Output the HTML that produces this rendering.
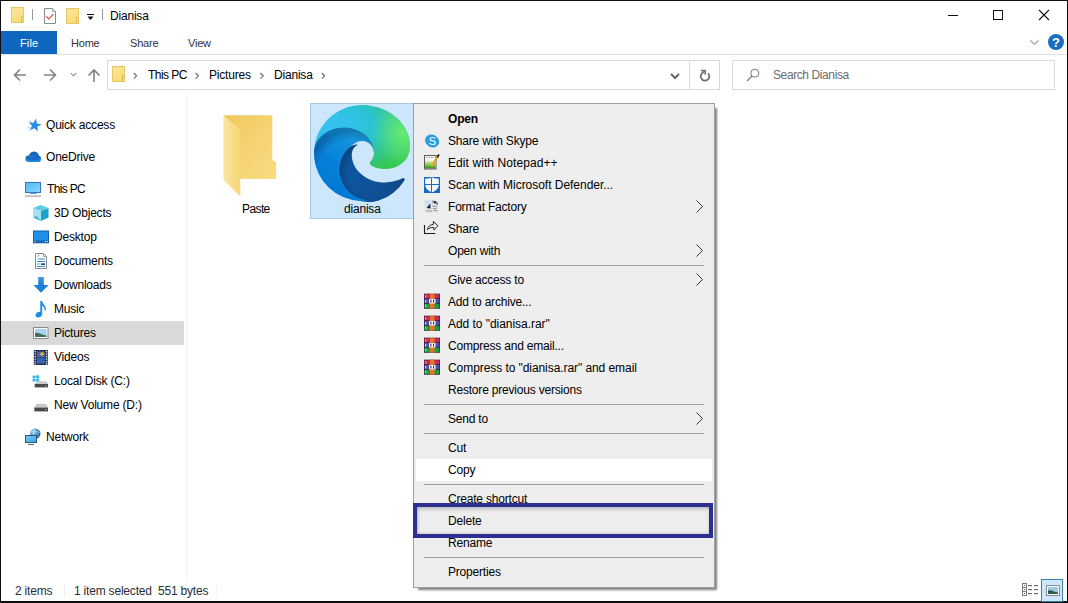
<!DOCTYPE html>
<html><head><meta charset="utf-8">
<style>
html,body{margin:0;padding:0}
body{width:1068px;height:603px;overflow:hidden;background:#fff;position:relative;font-family:"Liberation Sans",sans-serif;color:#000}
.a{position:absolute}
.t{position:absolute;white-space:nowrap;font-size:12px;line-height:14px;letter-spacing:-0.2px}
svg{position:absolute;overflow:visible}
</style></head><body>
<!-- window borders -->
<div class="a" style="left:0;top:0;width:1068px;height:1px;background:#0d0d0d"></div>
<div class="a" style="left:0;top:0;width:1px;height:603px;background:#0d0d0d"></div>
<div class="a" style="left:1067px;top:0;width:1px;height:603px;background:#0d0d0d"></div>
<div class="a" style="left:0;top:601px;width:1068px;height:2px;background:#0d0d0d"></div>

<!-- TITLE BAR -->
<div id="title">
<div class="t" style="left:110px;top:9px;">Dianisa</div>
</div>

<!-- TITLE ICONS -->
<svg style="left:0;top:0" width="1068" height="100">
 <defs><linearGradient id="qaf" x1="0" y1="0" x2="0.3" y2="1"><stop offset="0" stop-color="#fbe59c"/><stop offset="1" stop-color="#f8dc78"/></linearGradient></defs>
 <!-- qa folder 1 -->
 <rect x="11.5" y="7.5" width="12" height="15" fill="url(#qaf)" stroke="#e8c866" stroke-width="1"/>
 
 <path d="M21.5 16.5 V22.5 M21.5 16.5 H23.5" stroke="#dfb75a" stroke-width="1" fill="none"/>
 <line x1="32.5" y1="9" x2="32.5" y2="20" stroke="#9a9a9a" stroke-width="1"/>
 <!-- doc check -->
 <path d="M44.5 8.5 H52.5 L55.5 11.5 V23.5 H44.5 Z" fill="#fff" stroke="#8a8a8a" stroke-width="1"/>
 <path d="M52.5 8.5 V11.5 H55.5 Z" fill="#e8e8e8" stroke="#9a9a9a" stroke-width="0.8"/>
 <path d="M46.3 16.2 L48.7 19 L53.5 14" fill="none" stroke="#d86448" stroke-width="1.2"/>
 <!-- folder 2 -->
 <rect x="66.5" y="8.5" width="12" height="15" fill="url(#qaf)" stroke="#e8c866" stroke-width="1"/>
 
 <path d="M76.5 17.5 V23.5 M76.5 17.5 H78.5" stroke="#dfb75a" stroke-width="1" fill="none"/>
 <!-- dropdown -->
 <rect x="87" y="14" width="7" height="1" fill="#111"/>
 <path d="M87.5 16.6 H93.5 L90.5 20 Z" fill="#111"/>
 <line x1="102.5" y1="9" x2="102.5" y2="20" stroke="#9a9a9a" stroke-width="1"/>
 <!-- window controls -->
 <rect x="948" y="15" width="10" height="1" fill="#111"/>
 <rect x="993.5" y="10.5" width="9" height="9" fill="none" stroke="#111" stroke-width="1"/>
 <path d="M1039 10 L1049 20 M1049 10 L1039 20" stroke="#111" stroke-width="1.1"/>
 <!-- ribbon chevron + help -->
 <path d="M1030.5 40.5 L1034.5 44.3 L1038.5 40.5" fill="none" stroke="#9a9a9a" stroke-width="1.1"/>
 <circle cx="1056" cy="42" r="8" fill="#1c6cc0"/>
 <text x="1056" y="46.6" text-anchor="middle" font-family="Liberation Sans" font-weight="bold" font-size="13" fill="#fff">?</text>
 <!-- nav arrows -->
 <g stroke="#828282" stroke-width="1.6" fill="none">
  <path d="M14.5 75 H26 M20 69.5 L14.5 75 L20 80.5"/>
  <path d="M44 75 H55.5 M50 69.5 L55.5 75 L50 80.5"/>
  <path d="M88.5 75.5 L94 70 L99.5 75.5 M94 70 V82"/>
 </g>
 <path d="M70.8 73.2 L73.5 75.8 L76.2 73.2" fill="none" stroke="#8a8a8a" stroke-width="1.1"/>
 <!-- address folder -->
 <rect x="112.5" y="66.5" width="12" height="15" fill="url(#qaf)" stroke="#e8c866" stroke-width="1"/>
 
 <path d="M122.5 75.5 V81.5 M122.5 75.5 H124.5" stroke="#dfb75a" stroke-width="1" fill="none"/>
 <g stroke="#707070" stroke-width="1.2" fill="none">
  <path d="M133.8 73 L136.6 75.8 L133.8 78.6"/>
  <path d="M195.6 73 L198.4 75.8 L195.6 78.6"/>
  <path d="M260.4 73 L263.2 75.8 L260.4 78.6"/>
  <path d="M321.8 73 L324.6 75.8 L321.8 78.6"/>
 </g>
 <path d="M671 74 L675 78 L679 74" fill="none" stroke="#666" stroke-width="2"/>
 <!-- refresh -->
 <path d="M708 73.3 A4.3 4.3 0 1 1 702 73.3 L704.6 70.8" fill="none" stroke="#707070" stroke-width="1.8"/>
 <path d="M701 70.6 H705.2 V74.8" fill="none" stroke="#707070" stroke-width="1.5"/>
 <!-- search -->
 <circle cx="754.8" cy="73.2" r="4" fill="none" stroke="#777" stroke-width="1"/>
 <path d="M752 76 L747 81" stroke="#777" stroke-width="1.1"/>
</svg>

<!-- RIBBON TABS -->
<div class="a" style="left:1px;top:31px;width:56px;height:23px;background:#0e66bf"></div>
<div class="t" style="left:20px;top:36px;color:#fff;font-size:11px;letter-spacing:0.15px">File</div>
<div class="t" style="left:71px;top:36px;color:#333;font-size:11px">Home</div>
<div class="t" style="left:130px;top:36px;color:#333;font-size:11px">Share</div>
<div class="t" style="left:188px;top:36px;color:#333;font-size:11px">View</div>
<div class="a" style="left:1px;top:54px;width:1066px;height:1px;background:#e3e3e3"></div>

<!-- ADDRESS BAR -->
<div class="a" style="left:107px;top:60px;width:611px;height:28px;border:1px solid #d9d9d9"></div>
<div class="a" style="left:689px;top:61px;width:1px;height:28px;background:#d9d9d9"></div>
<div class="t" style="left:148px;top:68px;letter-spacing:-0.55px">This PC</div>
<div class="t" style="left:209px;top:68px;">Pictures</div>
<div class="t" style="left:274px;top:68px;">Dianisa</div>
<div class="a" style="left:732px;top:60px;width:321px;height:28px;border:1px solid #d9d9d9"></div>
<div class="t" style="left:773px;top:68px;color:#6d6d6d;letter-spacing:-0.4px">Search Dianisa</div>

<!-- NAV PANE -->
<div class="a" style="left:186px;top:92px;width:1px;height:490px;background:#f3f3f3"></div>
<div class="a" style="left:1px;top:321px;width:183px;height:24px;background:#d9d9d9"></div>
<div class="t" style="left:46px;top:118px;">Quick access</div>
<div class="t" style="left:46px;top:150px;">OneDrive</div>
<div class="t" style="left:47px;top:182px;letter-spacing:-0.65px">This PC</div>
<div class="t" style="left:54px;top:206px;">3D Objects</div>
<div class="t" style="left:54px;top:230px;">Desktop</div>
<div class="t" style="left:54px;top:254px;">Documents</div>
<div class="t" style="left:54px;top:278px;">Downloads</div>
<div class="t" style="left:54px;top:302px;">Music</div>
<div class="t" style="left:54px;top:326px;">Pictures</div>
<div class="t" style="left:54px;top:350px;">Videos</div>
<div class="t" style="left:54px;top:374px;">Local Disk (C:)</div>
<div class="t" style="left:54px;top:398px;">New Volume (D:)</div>
<div class="t" style="left:46px;top:430px;">Network</div>

<!-- CONTENT -->
<div class="t" style="left:242px;top:202px;letter-spacing:-0.6px">Paste</div>
<div class="a" style="left:310px;top:103px;width:102px;height:114px;background:#cce6fb;border:1px solid #a6c9e6"></div>
<div class="t" style="left:344px;top:202px;">dianisa</div>

<!-- NAV ICONS -->
<svg style="left:0;top:0" width="200" height="460">
 <defs>
  <linearGradient id="cloudg" x1="0" y1="0" x2="0" y2="1"><stop offset="0" stop-color="#0b5cb0"/><stop offset="1" stop-color="#2c8fe2"/></linearGradient>
  <linearGradient id="scrg" x1="0" y1="0" x2="1" y2="1"><stop offset="0" stop-color="#4fb8f5"/><stop offset="1" stop-color="#8ad6fa"/></linearGradient>
  <linearGradient id="dlg" x1="0" y1="0" x2="0" y2="1"><stop offset="0" stop-color="#3d9ae6"/><stop offset="1" stop-color="#1a7ad6"/></linearGradient>
 </defs>
 <!-- star -->
 <path d="M36.00 118.60 L36.89 123.39 L41.63 124.44 L37.36 126.76 L37.82 131.60 L34.30 128.26 L29.84 130.19 L31.93 125.80 L28.71 122.16 L33.53 122.79 Z" fill="#2a8de0"/>
 <path d="M27.5 127.8 H30.5 M28.5 129.8 H31 M29.3 121.8 H31.5" stroke="#9ccbf0" stroke-width="0.9"/>
 <!-- cloud -->
 <g fill="url(#cloudg)">
  <circle cx="28.7" cy="158.7" r="3.3"/>
  <circle cx="34" cy="156.8" r="5.2"/>
  <circle cx="38" cy="158.9" r="3.1"/>
  <rect x="28.7" y="158" width="9.3" height="4"/>
 </g>
 <!-- monitor -->
 <rect x="25.5" y="182.5" width="15" height="10" fill="url(#scrg)" stroke="#2f78c4" stroke-width="1"/>
 <rect x="30" y="193" width="7" height="1" fill="#7a9ab8"/>
 <rect x="25" y="195.5" width="16" height="1.2" fill="#a0a0a0"/>
 <!-- cube -->
 <path d="M33 208 L41 211 V221 L33 217.5 Z" fill="#a8e2ef"/>
 <path d="M41 211 L48.5 208 V217.5 L41 221 Z" fill="#1aa3c9"/>
 <path d="M33 208 L40.7 205 L48.5 208 L41 211 Z" fill="#5fcbe3"/>
 <path d="M33 217.5 L37 216 L41 221 Z" fill="#3bb6d6"/>
 <!-- desktop -->
 <rect x="33.5" y="231" width="15" height="11.8" fill="#1f8fe8" stroke="#1a5fa6" stroke-width="1"/>
 <rect x="34" y="240.5" width="14" height="2" fill="#155fa8"/>
 <rect x="34.5" y="241" width="1" height="1" fill="#fff"/><rect x="45" y="241" width="1" height="1" fill="#fff"/><rect x="46.8" y="241" width="1" height="1" fill="#fff"/>
 <!-- documents -->
 <path d="M35.5 253.5 H43.5 L46.5 256.5 V268.5 H35.5 Z" fill="#fff" stroke="#8c8c8c" stroke-width="1"/>
 <path d="M43.5 253.5 V256.5 H46.5" fill="none" stroke="#a0a0a0" stroke-width="1"/>
 <path d="M37.5 256.5 L39.5 254.8 M38 259 H45 M37 261.5 H45 M37 264 H39.5 M41 264 H45 M37 266.5 H45" stroke="#3a8fd8" stroke-width="1"/>
 <rect x="41" y="263.5" width="4" height="1.5" fill="#2a4a7a"/>
 <!-- downloads -->
 <rect x="38.2" y="277" width="5.6" height="8.5" fill="url(#dlg)"/>
 <path d="M33.4 285 H48.6 L41 292.8 Z" fill="#1f80da"/>
 <!-- music -->
 <path d="M40.3 301 H42.2 V313.5 A3.5 2.7 -25 1 1 40.3 311.8 Z" fill="#1e8fe6"/>
 <path d="M42 301.5 C43 304 46.5 306 45.8 309.8 L44.8 311.5 C45 308 43.5 306 42 305.5 Z" fill="#1e8fe6"/>
 <!-- pictures -->
 <rect x="33.5" y="327.5" width="14.5" height="11" fill="#fff" stroke="#8a8a8a" stroke-width="1"/>
 <rect x="35" y="329" width="11.5" height="8" fill="#a9d3ee"/>
 <path d="M35 333 C38 332 41 334.5 46.5 335.5 V337 H35 Z" fill="#3f6f5e"/>
 <!-- videos -->
 <rect x="33.8" y="350" width="14" height="15" fill="#23314f"/>
 <rect x="36.8" y="351.5" width="8" height="5.8" fill="#5560a8"/>
 <rect x="36.8" y="357.8" width="8" height="5.8" fill="#3466b8"/>
 <circle cx="42" cy="354" r="1.8" fill="#e8c020"/>
 <g fill="#fff"><rect x="34.6" y="351" width="1.2" height="1.2"/><rect x="34.6" y="353.5" width="1.2" height="1.2"/><rect x="34.6" y="356" width="1.2" height="1.2"/><rect x="34.6" y="358.5" width="1.2" height="1.2"/><rect x="34.6" y="361" width="1.2" height="1.2"/><rect x="34.6" y="363.3" width="1.2" height="1.2"/>
 <rect x="45.8" y="351" width="1.2" height="1.2"/><rect x="45.8" y="353.5" width="1.2" height="1.2"/><rect x="45.8" y="356" width="1.2" height="1.2"/><rect x="45.8" y="358.5" width="1.2" height="1.2"/><rect x="45.8" y="361" width="1.2" height="1.2"/><rect x="45.8" y="363.3" width="1.2" height="1.2"/></g>
 <!-- local disk -->
 <g fill="#2fb6e6"><rect x="32.6" y="375.7" width="3" height="2.6"/><rect x="36.2" y="375.3" width="3" height="3"/><rect x="32.6" y="378.9" width="3" height="2.6"/><rect x="36.2" y="378.9" width="3" height="2.8"/></g>
 <path d="M35 384 L36.5 381.3 H46.5 L48 384 Z" fill="#c9c9c9"/>
 <rect x="34.7" y="384" width="13.3" height="3.4" fill="#4a4a4a"/>
 <rect x="45" y="385.2" width="1.5" height="1.2" fill="#3fd26a"/>
 <!-- new volume -->
 <path d="M34.6 407.5 L36.3 403.8 H46.3 L48 407.5 Z" fill="#c9c9c9"/>
 <rect x="34.3" y="407.5" width="13.7" height="3.9" fill="#4a4a4a"/>
 <rect x="45" y="409" width="1.5" height="1.2" fill="#3fd26a"/>
 <!-- network -->
 <defs><radialGradient id="globeg" cx="0.35" cy="0.35" r="0.75"><stop offset="0" stop-color="#a8d8f5"/><stop offset="0.55" stop-color="#4a90c8"/><stop offset="1" stop-color="#24527e"/></radialGradient>
 <linearGradient id="netscr" x1="0" y1="0" x2="1" y2="1"><stop offset="0" stop-color="#7ec8f4"/><stop offset="1" stop-color="#3aa0ec"/></linearGradient></defs>
 <circle cx="35.3" cy="433.6" r="5.2" fill="url(#globeg)"/>
 <path d="M31 432 C33 430.5 37 431 39.5 432.8 M34.5 428.8 C33.3 431 33.5 435.5 35 438" stroke="#c8e6f8" stroke-width="0.7" fill="none" opacity="0.8"/>
 <rect x="25.5" y="435.5" width="11" height="7" fill="url(#netscr)" stroke="#2c5878" stroke-width="1"/>
 <rect x="28.2" y="444" width="5.8" height="1" fill="#5a6470"/>
</svg>
<!-- BIG FOLDER -->
<svg style="left:0;top:0" width="300" height="220">
 <defs>
  <linearGradient id="fback" x1="0" y1="0" x2="1" y2="1"><stop offset="0" stop-color="#f0c75a"/><stop offset="0.5" stop-color="#f5d372"/><stop offset="1" stop-color="#f9dc80"/></linearGradient>
  <linearGradient id="ffront" x1="0" y1="0" x2="1" y2="0"><stop offset="0" stop-color="#fbe6a0"/><stop offset="1" stop-color="#f6d676"/></linearGradient>
 </defs>
 <path d="M223.5 115.3 H272.3 V160 L276.2 162.5 V179 H240 Z" fill="url(#fback)"/>
 <path d="M223.5 115.3 L240.3 129.5 V196.5 L223.5 180 Z" fill="url(#ffront)"/>
</svg>
<svg width="96" height="96" viewBox="0 0 256 256" style="left:314px;top:105px">
<defs>
<linearGradient id="ea" x1="63.33" y1="180.87" x2="241.67" y2="180.87" gradientUnits="userSpaceOnUse"><stop offset="0" stop-color="#0c59a4"/><stop offset="1" stop-color="#114a8b"/></linearGradient>
<radialGradient id="eb" cx="161.83" cy="180.87" r="95.38" gradientTransform="matrix(1 0 0 .95 0 9.24)" gradientUnits="userSpaceOnUse"><stop offset=".72" stop-opacity="0"/><stop offset=".95" stop-opacity=".53"/><stop offset="1" stop-opacity=".53"/></radialGradient>
<linearGradient id="ec" x1="152.77" y1="99.66" x2="41.5" y2="220.86" gradientUnits="userSpaceOnUse"><stop offset="0" stop-color="#1b9de2"/><stop offset=".16" stop-color="#1595df"/><stop offset=".67" stop-color="#0680d7"/><stop offset="1" stop-color="#0078d4"/></linearGradient>
<radialGradient id="ed" cx="89.27" cy="204.62" r="143.24" gradientTransform="matrix(.15 -.99 .8 .12 -89.4 267.06)" gradientUnits="userSpaceOnUse"><stop offset=".76" stop-opacity="0"/><stop offset=".95" stop-opacity=".5"/><stop offset="1" stop-opacity=".5"/></radialGradient>
<radialGradient id="ee" cx="25.86" cy="48.1" r="202.43" gradientTransform="matrix(-.04 1 -2.13 -.08 127.3 27.17)" gradientUnits="userSpaceOnUse"><stop offset="0" stop-color="#35c1f1"/><stop offset=".11" stop-color="#34c1ed"/><stop offset=".23" stop-color="#2fc2df"/><stop offset=".31" stop-color="#2bc3d2"/><stop offset=".67" stop-color="#36c752"/></radialGradient>
<radialGradient id="ef" cx="236.7" cy="77.32" r="97.34" gradientTransform="matrix(.28 .96 -.78 .23 230.33 -168.37)" gradientUnits="userSpaceOnUse"><stop offset="0" stop-color="#66eb6e"/><stop offset="1" stop-color="#66eb6e" stop-opacity="0"/></radialGradient>
</defs>
<path d="M235.68 195.51a93.73 93.73 0 01-10.54 4.71 101.87 101.87 0 01-35.9 6.46c-47.32 0-88.54-32.55-88.54-74.32A31.48 31.48 0 01117.13 105c-42.8 1.8-53.8 46.4-53.8 72.53 0 73.88 68.09 81.37 82.76 81.37 7.91 0 19.84-2.3 27-4.56l1.31-.44a128.34 128.34 0 0066.6-52.8 4 4 0 00-5.32-5.59z" fill="url(#ea)"/>
<path d="M235.68 195.51a93.73 93.73 0 01-10.54 4.71 101.87 101.87 0 01-35.9 6.46c-47.32 0-88.54-32.55-88.54-74.32A31.48 31.48 0 01117.13 105c-42.8 1.8-53.8 46.4-53.8 72.53 0 73.88 68.09 81.37 82.76 81.37 7.91 0 19.84-2.3 27-4.56l1.31-.44a128.34 128.34 0 0066.6-52.8 4 4 0 00-5.32-5.59z" fill="url(#eb)" opacity=".35"/>
<path d="M105.73 241.42a79.2 79.2 0 01-22.74-21.34 80.72 80.72 0 0129.53-120c3.12-1.47 8.45-4.13 15.54-4a32.35 32.35 0 0125.69 13 31.88 31.88 0 016.36 18.66c0-.21 24.46-79.6-80-79.6-43.9 0-80 41.66-80 78.21a130.15 130.15 0 0012.11 56 128 128 0 00156.38 67.11 75.55 75.55 0 01-62.78-8z" fill="url(#ec)"/>
<path d="M105.73 241.42a79.2 79.2 0 01-22.74-21.34 80.72 80.72 0 0129.53-120c3.12-1.47 8.45-4.13 15.54-4a32.35 32.35 0 0125.69 13 31.88 31.88 0 016.36 18.66c0-.21 24.46-79.6-80-79.6-43.9 0-80 41.66-80 78.21a130.15 130.15 0 0012.11 56 128 128 0 00156.38 67.11 75.55 75.55 0 01-62.78-8z" fill="url(#ed)" opacity=".41"/>
<path d="M152.33 148.78c-.81 1.05-3.3 2.5-3.3 5.66 0 2.61 1.7 5.12 4.72 7.23 14.38 10 41.49 8.68 41.56 8.68a59.56 59.56 0 0030.27-8.35 61.38 61.38 0 0030.43-52.88c.26-22.41-8-37.31-11.34-43.91C223.48 23.76 177.49 0 127.48 0A128 128 0 000 126.2c.48-36.54 36.8-66.05 80-66.05 3.5 0 23.46.34 42 10.07 16.34 8.58 24.9 18.94 30.85 29.21 6.18 10.67 7.28 24.15 7.28 29.52s-2.74 13.33-7.8 19.83z" fill="url(#ee)"/>
<path d="M152.33 148.78c-.81 1.05-3.3 2.5-3.3 5.66 0 2.61 1.7 5.12 4.72 7.23 14.38 10 41.49 8.68 41.56 8.68a59.560 59.56 0 0030.27-8.35 61.38 61.38 0 0030.43-52.88c.26-22.41-8-37.31-11.34-43.91C223.48 23.76 177.49 0 127.48 0A128 128 0 000 126.2c.48-36.540 36.8-66.05 80-66.05 3.5 0 23.46.34 42 10.07 16.34 8.58 24.9 18.94 30.85 29.21 6.18 10.67 7.28 24.15 7.28 29.52s-2.74 13.33-7.8 19.83z" fill="url(#ef)"/>
</svg>

<!-- STATUS BAR -->
<div class="a" style="left:64px;top:584px;width:1px;height:13px;background:#f0f0f0"></div>
<div class="a" style="left:216px;top:584px;width:1px;height:13px;background:#f3f3f3"></div>
<div class="t" style="left:15px;top:584px;color:#2a2d38">2 items</div>
<div class="t" style="left:74px;top:584px;color:#2a2d38">1 item selected&nbsp; 551 bytes</div>

<!-- CONTEXT MENU -->
<div class="a" style="left:413px;top:103px;width:300px;height:483px;background:#eeeeee;border:1px solid #a0a0a0;box-shadow:3px 3px 2px -1.5px rgba(0,0,0,0.5)"></div>
<div id="menu">
<div class="t" style="left:448px;top:112px;font-weight:bold;">Open</div>
<div class="t" style="left:448px;top:134px;">Share with Skype</div>
<!--icon skype y=130-->
<div class="t" style="left:448px;top:156px;letter-spacing:0.08px;">Edit with Notepad++</div>
<!--icon npp y=152-->
<div class="t" style="left:448px;top:178px;letter-spacing:-0.03px;">Scan with Microsoft Defender...</div>
<!--icon def y=174-->
<div class="t" style="left:448px;top:200px;">Format Factory</div>
<!--icon ff y=196-->
<svg style="left:695px;top:200px" width="9" height="13"><path d="M1.5 0.5 L7.5 6.5 L1.5 12.5" fill="none" stroke="#333" stroke-width="1"/></svg>
<div class="t" style="left:448px;top:222px;">Share</div>
<!--icon share y=218-->
<div class="t" style="left:448px;top:244px;">Open with</div>
<svg style="left:695px;top:244px" width="9" height="13"><path d="M1.5 0.5 L7.5 6.5 L1.5 12.5" fill="none" stroke="#333" stroke-width="1"/></svg>
<div class="a" style="left:424px;top:265px;width:280px;height:1px;background:#a0a0a0"></div>
<div class="t" style="left:448px;top:273px;">Give access to</div>
<svg style="left:695px;top:273px" width="9" height="13"><path d="M1.5 0.5 L7.5 6.5 L1.5 12.5" fill="none" stroke="#333" stroke-width="1"/></svg>
<div class="t" style="left:448px;top:295px;">Add to archive...</div>
<!--icon rar y=291-->
<div class="t" style="left:448px;top:317px;letter-spacing:-0.04px;">Add to &quot;dianisa.rar&quot;</div>
<!--icon rar y=313-->
<div class="t" style="left:448px;top:339px;">Compress and email...</div>
<!--icon rar y=335-->
<div class="t" style="left:448px;top:361px;letter-spacing:-0.07px;">Compress to &quot;dianisa.rar&quot; and email</div>
<!--icon rar y=357-->
<div class="t" style="left:448px;top:383px;">Restore previous versions</div>
<div class="a" style="left:424px;top:404px;width:280px;height:1px;background:#a0a0a0"></div>
<div class="t" style="left:448px;top:412px;">Send to</div>
<svg style="left:695px;top:412px" width="9" height="13"><path d="M1.5 0.5 L7.5 6.5 L1.5 12.5" fill="none" stroke="#333" stroke-width="1"/></svg>
<div class="a" style="left:424px;top:433px;width:280px;height:1px;background:#a0a0a0"></div>
<div class="t" style="left:448px;top:441px;">Cut</div>
<div class="a" style="left:416px;top:459px;width:296px;height:22px;background:#ffffff"></div>
<div class="t" style="left:448px;top:463px;">Copy</div>
<div class="a" style="left:424px;top:484px;width:280px;height:1px;background:#a0a0a0"></div>
<div class="t" style="left:448px;top:492px;">Create shortcut</div>
<div class="t" style="left:448px;top:514px;">Delete</div>
<div class="t" style="left:448px;top:536px;">Rename</div>
<div class="a" style="left:424px;top:557px;width:280px;height:1px;background:#a0a0a0"></div>
<div class="t" style="left:448px;top:565px;">Properties</div>
</div>
<!-- MENU ICONS -->
<svg style="left:0;top:0" width="760" height="600">
 <!-- skype -->
 <ellipse cx="432.1" cy="141" rx="7.3" ry="6.3" transform="rotate(32 432.1 141)" fill="#2a9fe0"/>
 <text x="432.3" y="145.2" text-anchor="middle" font-family="Liberation Sans" font-size="11" fill="#fff">S</text>
 <!-- notepad++ -->
 <defs><linearGradient id="nppg" x1="0" y1="0" x2="0" y2="1"><stop offset="0" stop-color="#eef6d0"/><stop offset="0.6" stop-color="#7cc040"/><stop offset="1" stop-color="#2a8a18"/></linearGradient></defs>
 <rect x="424.5" y="155.5" width="11.5" height="13.5" fill="#f6f6f6" stroke="#5a5a5a" stroke-width="1"/>
 <rect x="425" y="160.5" width="10.5" height="8" fill="url(#nppg)"/>
 <path d="M426 157.5 H434" stroke="#9a9a9a" stroke-width="1" stroke-dasharray="1.5 1"/>
 <path d="M431.5 166.5 L437.8 156.5" stroke="#e6a41e" stroke-width="2.2"/>
 <path d="M437.2 157.3 L439 154.6" stroke="#1a1a1a" stroke-width="1.8"/>
 <!-- defender -->
 <rect x="424" y="177" width="16" height="16" fill="#176ac6"/>
 <path d="M425.2 178.6 Q428.8 178.9 432 177.6 Q435.2 178.9 438.8 178.6 V184.8 C438.8 188.3 435.8 190.8 432 192.3 C428.2 190.8 425.2 188.3 425.2 184.8 Z" fill="#f4fbff"/>
 <path d="M431.5 177.5 V192.5 M425 184.5 H439" stroke="#176ac6" stroke-width="1"/>
 <!-- format factory -->
 <rect x="424.5" y="200.3" width="14" height="12.5" fill="#dfe4e9"/>
 <rect x="425.5" y="200.5" width="4.5" height="5" fill="#c8e2f2"/>
 <path d="M426.6 208 L430.3 203.5 L431 208.5 Z" fill="#16203a"/>
 <path d="M430.5 204.5 L432 207 L430.8 208.5 Z" fill="#fff"/>
 <circle cx="435" cy="202.3" r="1.3" fill="#1c2230"/>
 <circle cx="437.2" cy="203.5" r="0.9" fill="#555"/>
 <path d="M432.5 206.3 H437 M433 208.5 H436.5 M426 211 H432 M433.5 210.5 H437.5" stroke="#8a909a" stroke-width="0.9"/>
 <rect x="432" y="200.5" width="2" height="2.5" fill="#9aa0a8"/>
 <!-- share -->
 <path d="M424.5 225 V233.5 H435.3" fill="none" stroke="#1a1a1a" stroke-width="1.1"/>
 <path d="M427.4 229.6 C428 226.3 430.5 224.6 433.4 224.3 V221.3 L437.9 225.8 L433.8 230 V227.4 C431.2 227.2 429 228 427.4 229.6 Z" fill="none" stroke="#1a1a1a" stroke-width="0.95" stroke-linejoin="round"/>
 <g transform="translate(424,293.7)">
  <rect x="0" y="0" width="16" height="15" fill="#2a1020"/>
  <rect x="0.5" y="0.5" width="15" height="4.2" fill="#c62c5c"/>
  <rect x="0.5" y="5.2" width="15" height="4.3" fill="#4e4eb4"/>
  <rect x="0.5" y="10" width="15" height="4.5" fill="#1e9c40"/>
  <rect x="6" y="0" width="4.5" height="15" fill="#e4742a"/>
  <rect x="5" y="5.2" width="6.5" height="4.6" fill="#fafafa"/>
  <path d="M6.9 5.8 V9 M9.6 5.8 V9" stroke="#3a1a1a" stroke-width="1"/>
  <rect x="1.2" y="1.5" width="1" height="2.5" fill="#f5b890"/><rect x="1.2" y="6.3" width="1" height="2.5" fill="#e0e0f8"/><rect x="1.2" y="11" width="1" height="2.5" fill="#b8f0a0"/>
 </g><g transform="translate(424,315.7)">
  <rect x="0" y="0" width="16" height="15" fill="#2a1020"/>
  <rect x="0.5" y="0.5" width="15" height="4.2" fill="#c62c5c"/>
  <rect x="0.5" y="5.2" width="15" height="4.3" fill="#4e4eb4"/>
  <rect x="0.5" y="10" width="15" height="4.5" fill="#1e9c40"/>
  <rect x="6" y="0" width="4.5" height="15" fill="#e4742a"/>
  <rect x="5" y="5.2" width="6.5" height="4.6" fill="#fafafa"/>
  <path d="M6.9 5.8 V9 M9.6 5.8 V9" stroke="#3a1a1a" stroke-width="1"/>
  <rect x="1.2" y="1.5" width="1" height="2.5" fill="#f5b890"/><rect x="1.2" y="6.3" width="1" height="2.5" fill="#e0e0f8"/><rect x="1.2" y="11" width="1" height="2.5" fill="#b8f0a0"/>
 </g><g transform="translate(424,337.7)">
  <rect x="0" y="0" width="16" height="15" fill="#2a1020"/>
  <rect x="0.5" y="0.5" width="15" height="4.2" fill="#c62c5c"/>
  <rect x="0.5" y="5.2" width="15" height="4.3" fill="#4e4eb4"/>
  <rect x="0.5" y="10" width="15" height="4.5" fill="#1e9c40"/>
  <rect x="6" y="0" width="4.5" height="15" fill="#e4742a"/>
  <rect x="5" y="5.2" width="6.5" height="4.6" fill="#fafafa"/>
  <path d="M6.9 5.8 V9 M9.6 5.8 V9" stroke="#3a1a1a" stroke-width="1"/>
  <rect x="1.2" y="1.5" width="1" height="2.5" fill="#f5b890"/><rect x="1.2" y="6.3" width="1" height="2.5" fill="#e0e0f8"/><rect x="1.2" y="11" width="1" height="2.5" fill="#b8f0a0"/>
 </g><g transform="translate(424,359.7)">
  <rect x="0" y="0" width="16" height="15" fill="#2a1020"/>
  <rect x="0.5" y="0.5" width="15" height="4.2" fill="#c62c5c"/>
  <rect x="0.5" y="5.2" width="15" height="4.3" fill="#4e4eb4"/>
  <rect x="0.5" y="10" width="15" height="4.5" fill="#1e9c40"/>
  <rect x="6" y="0" width="4.5" height="15" fill="#e4742a"/>
  <rect x="5" y="5.2" width="6.5" height="4.6" fill="#fafafa"/>
  <path d="M6.9 5.8 V9 M9.6 5.8 V9" stroke="#3a1a1a" stroke-width="1"/>
  <rect x="1.2" y="1.5" width="1" height="2.5" fill="#f5b890"/><rect x="1.2" y="6.3" width="1" height="2.5" fill="#e0e0f8"/><rect x="1.2" y="11" width="1" height="2.5" fill="#b8f0a0"/>
 </g>
</svg>
<!-- VIEW BUTTONS -->
<svg style="left:0;top:0" width="1068" height="603">
 <g fill="none" stroke="#7a7a7a" stroke-width="1">
  <rect x="1022.5" y="583.5" width="4" height="4"/><rect x="1022.5" y="587.5" width="4" height="4"/><rect x="1022.5" y="591.5" width="4" height="4"/>
 </g>
 <g fill="#555"><rect x="1024" y="585" width="1" height="1"/><rect x="1024" y="589" width="1" height="1"/><rect x="1024" y="593" width="1" height="1"/></g>
 <g fill="#6a6a6a"><rect x="1028" y="585" width="4" height="1.2"/><rect x="1034" y="585" width="4" height="1.2"/><rect x="1028" y="589" width="4" height="1.2"/><rect x="1034" y="589" width="4" height="1.2"/><rect x="1028" y="593" width="4" height="1.2"/><rect x="1034" y="593" width="4" height="1.2"/></g>
 <rect x="1041.5" y="579.5" width="21" height="22" fill="#cce8ff" stroke="#3a82a8" stroke-width="1"/>
 <rect x="1046.5" y="585.5" width="13" height="10" fill="#fff" stroke="#8a8a8a" stroke-width="1"/>
 <rect x="1048" y="587" width="10" height="7" fill="#9cc8e4"/>
 <path d="M1048 590.5 C1051 589.5 1054 592 1058 592.5 V594 H1048 Z" fill="#2f5a58"/>
</svg>

<!-- DELETE HIGHLIGHT BOX -->
<div class="a" style="left:413px;top:503px;width:292px;height:27px;border:4px solid #2d3090;box-shadow:inset 0 3px 4px -1px rgba(0,0,0,0.22), inset 0 -2px 3px -1px rgba(0,0,0,0.12), inset 2px 0 3px -1px rgba(0,0,0,0.15)"></div>

</body></html>
